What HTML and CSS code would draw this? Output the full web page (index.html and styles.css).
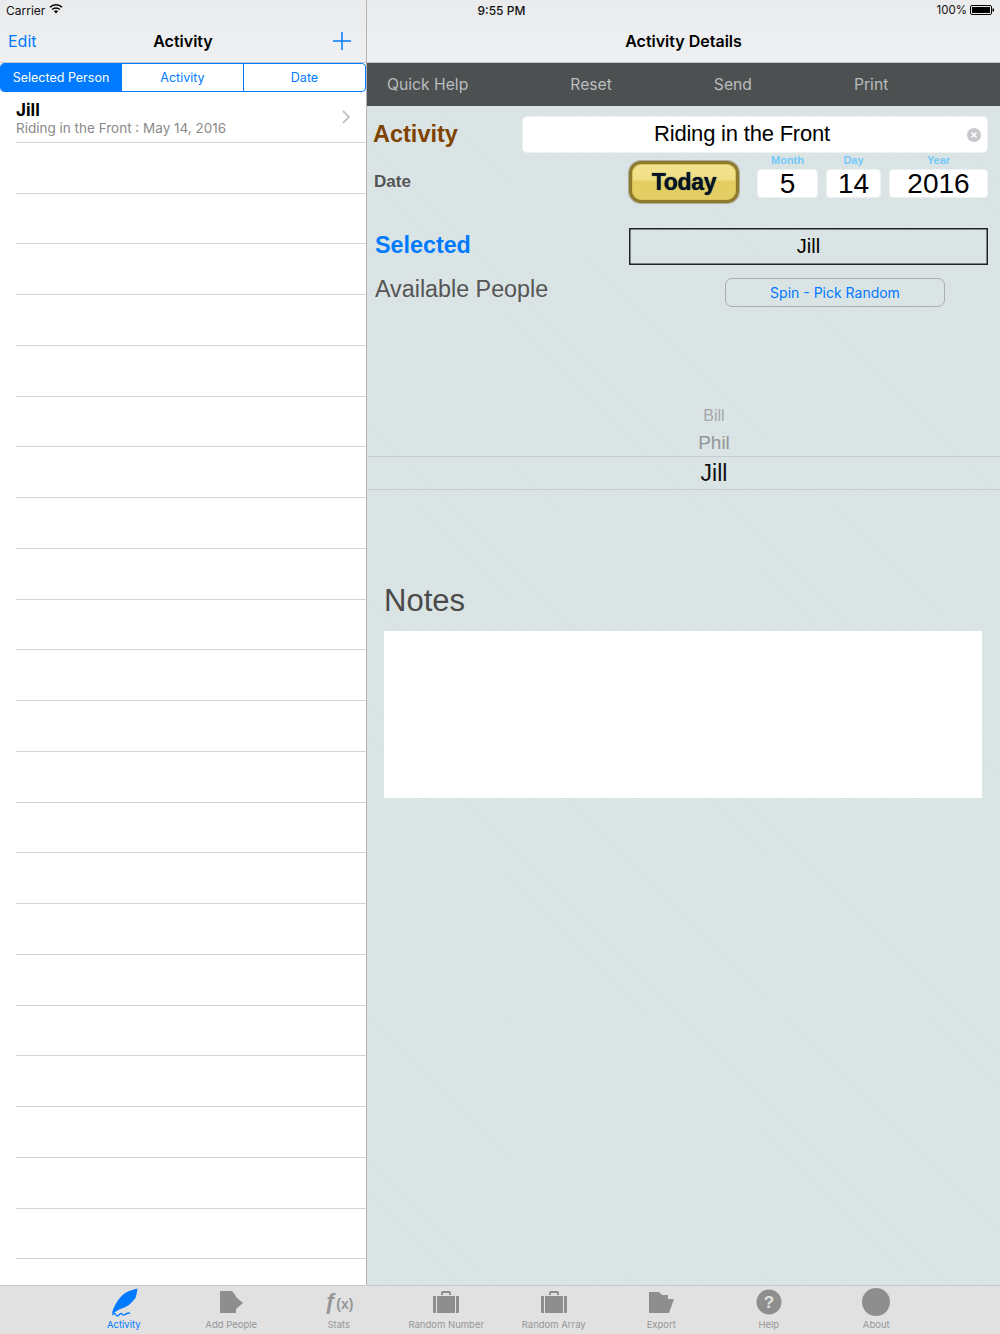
FILE: index.html
```html
<!DOCTYPE html>
<html lang="en">
<head>
    <meta charset="UTF-8">
    <title>Activity</title>
    <link rel="stylesheet" href="styles.css">
</head>
<body>

    <div class="status">
        <span class="carrier">Carrier
            <svg class="wifi" width="14" height="10" viewBox="0 0 14 10"><path d="M7 9.600 4.900 7.300a3 3 0 0 1 4.200 0zM3.700 6.100 2.700 5a6.200 6.200 0 0 1 8.600 0l-1 1.100a4.700 4.700 0 0 0-6.600 0zM1.500 3.800.4 2.700a9.500 9.500 0 0 1 13.200 0l-1.100 1.100a8 8 0 0 0-11 0z"/></svg>
        </span>
        <span class="clock">9:55 PM</span>
        <span class="power">100%
            <svg width="24" height="10" viewBox="0 0 24 10"><rect x=".5" y=".5" width="21" height="9" rx="1.500" fill="none" stroke="#000"/><rect x="2" y="2" width="18" height="6"/><rect x="22.500" y="3.500" width="1.500" height="3"/></svg>
        </span>
    </div>

    <div class="main">
        <div class="master">
            <div class="navbar">
                <a class="nav-edit">Edit</a>
                <span class="nav-title">Activity</span>
                <svg class="nav-add" width="18" height="18" viewBox="0 0 18 18"><path d="M9 0v18M0 9h18" stroke="#007aff" stroke-width="1.500"/></svg>
            </div>
            <div class="segments">
                <span class="segment active">Selected Person</span>
                <span class="segment">Activity</span>
                <span class="segment">Date</span>
            </div>
            <ul class="list">
                <li class="list-row">
                    <div class="row-name">Jill</div>
                    <div class="row-sub">Riding in the Front : May 14, 2016</div>
                    <svg class="chevron" width="9" height="14" viewBox="0 0 9 14"><path d="M1 1l6 6-6 6" fill="none" stroke="#c4c4c8" stroke-width="1.800"/></svg>
                </li>
                <li class="list-row"></li><li class="list-row"></li><li class="list-row"></li>
                <li class="list-row"></li><li class="list-row"></li><li class="list-row"></li>
                <li class="list-row"></li><li class="list-row"></li><li class="list-row"></li>
                <li class="list-row"></li><li class="list-row"></li><li class="list-row"></li>
                <li class="list-row"></li><li class="list-row"></li><li class="list-row"></li>
                <li class="list-row"></li><li class="list-row"></li><li class="list-row"></li>
                <li class="list-row"></li><li class="list-row"></li><li class="list-row"></li>
                <li class="list-row"></li>
            </ul>
        </div>

        <div class="detail">
            <div class="navbar">
                <span class="nav-title">Activity Details</span>
            </div>
            <div class="toolbar">
                <span>Quick Help</span>
                <span>Reset</span>
                <span>Send</span>
                <span>Print</span>
            </div>

            <div class="form">
                <div class="form-row">
                    <label class="lbl-activity">Activity</label>
                    <div class="activity-field">
                        Riding in the Front
                        <svg class="clear" width="14" height="14" viewBox="0 0 14 14"><circle cx="7" cy="7" r="7" fill="#c7c7cc"/><path d="M4.500 4.500l5 5M9.500 4.500l-5 5" stroke="#fff" stroke-width="1.500"/></svg>
                    </div>
                </div>

                <div class="date-row">
                    <label class="lbl-date">Date</label>
                    <button class="today">Today</button>
                    <div class="date-part month"><span>Month</span><div class="date-box">5</div></div>
                    <div class="date-part day"><span>Day</span><div class="date-box">14</div></div>
                    <div class="date-part year"><span>Year</span><div class="date-box">2016</div></div>
                </div>

                <div class="form-row selected-row">
                    <label class="lbl-selected">Selected</label>
                    <div class="selected-box">Jill</div>
                </div>

                <div class="available-row">
                    <label class="lbl-available">Available People</label>
                    <button class="spin">Spin - Pick Random</button>
                </div>
            </div>

            <div class="picker">
                <div class="pick-far">Bill</div>
                <div class="pick-near">Phil</div>
                <div class="pick-current">Jill</div>
            </div>

            <div class="notes-title">Notes</div>
            <div class="notes-box"></div>
        </div>
    </div>

    <div class="tabbar">
        <div class="tab current">
            <svg width="30" height="30" viewBox="0 0 30 30"><path d="M3 25C6 15 12 6 20 3L28.500 .5C28 5 27 8 26.500 10 24 13 22 15 20 17 17 19 14 20 11.500 21 9 22 7 23 5 25z"/><path d="M3 27c2-2 3-2 4 0s2 1 4-1 2 2 4 1 3-2 6-2" fill="none" stroke="#007aff" stroke-width="1.300"/></svg>
            <span>Activity</span>
        </div>
        <div class="tab">
            <svg width="30" height="30" viewBox="0 0 30 30"><path d="M4 3h12l4 5v1l7 6-7 6v4H4z"/></svg>
            <span>Add People</span>
        </div>
        <div class="tab">
            <div class="fx"><i>ƒ</i><b>(x)</b></div>
            <span>Stats</span>
        </div>
        <div class="tab">
            <svg width="30" height="30" viewBox="0 0 30 30"><path d="M2 8h3v17H3a1 1 0 0 1-1-1zM6 8h18v17H6zM25 8h3v16a1 1 0 0 1-1 1h-2zM10 7V5a2 2 0 0 1 2-2h6a2 2 0 0 1 2 2v2h-2V5h-6v2z"/></svg>
            <span>Random Number</span>
        </div>
        <div class="tab">
            <svg width="30" height="30" viewBox="0 0 30 30"><path d="M2 8h3v17H3a1 1 0 0 1-1-1zM6 8h18v17H6zM25 8h3v16a1 1 0 0 1-1 1h-2zM10 7V5a2 2 0 0 1 2-2h6a2 2 0 0 1 2 2v2h-2V5h-6v2z"/></svg>
            <span>Random Array</span>
        </div>
        <div class="tab">
            <svg width="30" height="30" viewBox="0 0 30 30"><path d="M3 4h10l3 3h6v4h6l-5 14H3z"/></svg>
            <span>Export</span>
        </div>
        <div class="tab">
            <svg width="30" height="30" viewBox="0 0 30 30"><circle cx="15" cy="14" r="12.500"/><text x="15" y="20" text-anchor="middle" class="help-mark">?</text></svg>
            <span>Help</span>
        </div>
        <div class="tab">
            <svg width="30" height="30" viewBox="0 0 30 30"><circle cx="15" cy="14" r="14"/></svg>
            <span>About</span>
        </div>
    </div>

</body>
</html>
```

FILE: styles.css
```css
* {
    box-sizing: border-box;
}

body {
    margin: 0;
    width: 1000px;
    height: 1334px;
    overflow: hidden;
    position: relative;
    font-family: "Liberation Sans", Arial, sans-serif;
    background-color: #fff;
}

/* status bar sits on top of both nav bars */
.status {
    position: absolute;
    z-index: 2;
    top: 0;
    left: 0;
    right: 0;
    height: 20px;
    padding: 0 6px;
    display: flex;
    align-items: center;
    justify-content: space-between;
    font-family: Inter, sans-serif;
    font-size: 12px;
    color: #111;
}

.carrier, .power {
    display: flex;
    align-items: center;
    gap: 4px;
}

.power {
    gap: 3px;
    font-size: 11.500px;
}

.wifi {
    margin-bottom: 2px;
}

.clock {
    font-weight: 500;
    margin-left: 3px;
}

.main {
    display: flex;
    height: 1285px;
}

.master {
    width: 367px;
    border-right: 1px solid #b4b4b4;
    background-color: #fff;
}

.detail {
    flex: 1;
    background-color: #d9e3e4;
    background-image: repeating-linear-gradient(45deg, rgba(255, 255, 255, .09) 0 1px, transparent 1px 3px);
}

.navbar {
    height: 63px;
    padding-top: 20px;
    display: flex;
    align-items: center;
    justify-content: center;
    position: relative;
    background: linear-gradient(#eaebed, #eff0f1);
    border-bottom: 1px solid #c6c6c8;
    font-family: Inter, sans-serif;
}

.nav-title {
    font-size: 16px;
    font-weight: 600;
    color: #000;
}

.nav-edit {
    position: absolute;
    left: 8px;
    font-size: 16px;
    color: #007aff;
}

.nav-add {
    position: absolute;
    right: 15px;
}

.segments {
    display: flex;
    height: 29px;
    border: 1px solid #007aff;
    border-radius: 4px;
    overflow: hidden;
    font-family: Inter, sans-serif;
    font-size: 12.500px;
    color: #007aff;
}

.segment {
    flex: 1;
    display: flex;
    align-items: center;
    justify-content: center;
    padding-bottom: 1px;
    border-left: 1px solid #007aff;
}

.segment.active {
    flex: none;
    width: 120px;
    border-left: none;
    background-color: #007aff;
    color: #fff;
}

.list {
    list-style: none;
    margin: 0;
    padding: 0;
}

.list-row {
    height: 50.750px;
    margin-left: 16px;
    border-bottom: 1px solid #d4d4d6;
    position: relative;
    font-family: Inter, sans-serif;
}

.row-name {
    padding-top: 9px;
    font-size: 17px;
    font-weight: 700;
    line-height: 19px;
    color: #000;
}

.row-sub {
    font-size: 13.500px;
    line-height: 17px;
    color: #8a8a8a;
}

.chevron {
    position: absolute;
    right: 15px;
    top: 18px;
}

.toolbar {
    height: 43px;
    padding: 0 0 1px 20px;
    display: flex;
    align-items: center;
    gap: 102px;
    background-color: #4d5051;
    color: #b9bdbd;
    font-family: Inter, sans-serif;
    font-size: 15.700px;
}

.form {
    padding: 10px 12px 0 6px;
}

.form-row {
    display: flex;
    align-items: center;
}

.lbl-activity {
    width: 149px;
    font-size: 23.500px;
    font-weight: 700;
    color: #7f4300;
}

.activity-field {
    flex: 1;
    height: 37px;
    padding: 0 26px 2px 0;
    display: flex;
    align-items: center;
    justify-content: center;
    position: relative;
    background-color: #fff;
    border: 1px solid #eef1f1;
    border-radius: 5px;
    font-size: 22px;
    letter-spacing: -.2px;
    color: #000;
}

.clear {
    position: absolute;
    right: 6px;
    top: 11px;
}

.date-row {
    display: flex;
    align-items: flex-end;
    height: 48px;
    margin-top: 2px;
}

.lbl-date {
    width: 256px;
    margin-bottom: 11px;
    padding-left: 1px;
    font-size: 17px;
    font-weight: 700;
    color: #555;
}

.today {
    width: 110px;
    height: 42px;
    margin-right: 18px;
    padding: 0;
    border: 3px solid #8d7a2c;
    border-radius: 12px;
    background: linear-gradient(#f3e38f 0, #efdf86 42%, #e3cd60 50%, #e5d067 100%);
    box-shadow: 0 0 0 1px #a9a9a0, inset 0 0 0 1px #d9c25b;
    font-family: "Liberation Sans", Arial, sans-serif;
    font-size: 23px;
    font-weight: 700;
    letter-spacing: -.3px;
    color: #06121f;
    text-shadow: 0 0 1px #0a2a4a;
}

.date-part {
    margin-right: 8px;
    margin-bottom: 5px;
    text-align: center;
    font-size: 11px;
    font-weight: 700;
    color: #72c9fa;
}

.date-part span {
    display: block;
    height: 15px;
    margin-top: -1px;
}

.month {
    width: 61px;
}

.day {
    width: 55px;
}

.year {
    width: 99px;
    margin-right: 0;
}

.date-box {
    height: 29px;
    background-color: #fff;
    border: 1px solid #eef1f1;
    border-radius: 4px;
    font-size: 28px;
    font-weight: 400;
    line-height: 27px;
    color: #000;
}

.selected-row {
    margin-top: 25px;
}

.lbl-selected {
    width: 256px;
    padding: 0 0 3px 2px;
    font-size: 23.300px;
    font-weight: 700;
    color: #007aff;
}

.selected-box {
    flex: 1;
    height: 37px;
    display: flex;
    align-items: center;
    justify-content: center;
    border: 1px solid #222;
    box-shadow: inset 0 0 0 .5px #222;
    font-size: 20px;
    color: #000;
}

.available-row {
    display: flex;
    margin-top: 13px;
}

.lbl-available {
    width: 352px;
    padding-left: 2px;
    font-size: 23.300px;
    line-height: 22px;
    color: #555;
}

.spin {
    width: 220px;
    height: 29px;
    padding: 0;
    background: none;
    border: 1px solid #a9afb0;
    border-radius: 7px;
    font-family: Inter, sans-serif;
    font-size: 14px;
    color: #007aff;
}

.picker {
    height: 215px;
    margin-top: 59px;
    padding: 37px 0 0 61px;
    text-align: center;
}

.pick-far {
    height: 26px;
    line-height: 26px;
    font-size: 16px;
    color: #a3a8a9;
}

.pick-near {
    height: 27px;
    line-height: 27px;
    font-size: 19px;
    color: #939798;
}

.pick-current {
    height: 34px;
    margin-left: -61px;
    padding-left: 61px;
    border-top: 1px solid #c3cbcd;
    border-bottom: 1px solid #c3cbcd;
    line-height: 33px;
    font-size: 23px;
    color: #111;
}

.notes-title {
    height: 50px;
    padding-left: 17px;
    font-size: 31px;
    line-height: 40px;
    color: #4a4a4a;
}

.notes-box {
    height: 167px;
    margin: 0 18px 0 17px;
    background-color: #fff;
}

.tabbar {
    height: 49px;
    padding: 0 70px;
    display: flex;
    background-color: #e1e1e1;
    border-top: 1px solid #c9c9c9;
}

.tab {
    width: 107.500px;
    display: flex;
    flex-direction: column;
    align-items: center;
    font-family: Inter, sans-serif;
    font-size: 9.500px;
    color: #969696;
}

.tab svg, .fx {
    display: block;
    width: 30px;
    height: 30px;
    margin-top: 2px;
    margin-bottom: 1px;
    fill: #8e8e8e;
}

.tab span {
    line-height: 12px;
}

.tab.current {
    color: #007aff;
}

.tab.current svg {
    fill: #007aff;
}

.fx {
    text-align: center;
    white-space: nowrap;
    font-family: "Liberation Sans", Arial, sans-serif;
    font-size: 14px;
    line-height: 28px;
}

.fx i {
    font-size: 22px;
    font-weight: 700;
}

.help-mark {
    font-family: "Liberation Sans", Arial, sans-serif;
    font-size: 17px;
    font-weight: 700;
    fill: #e1e1e1;
}
```
